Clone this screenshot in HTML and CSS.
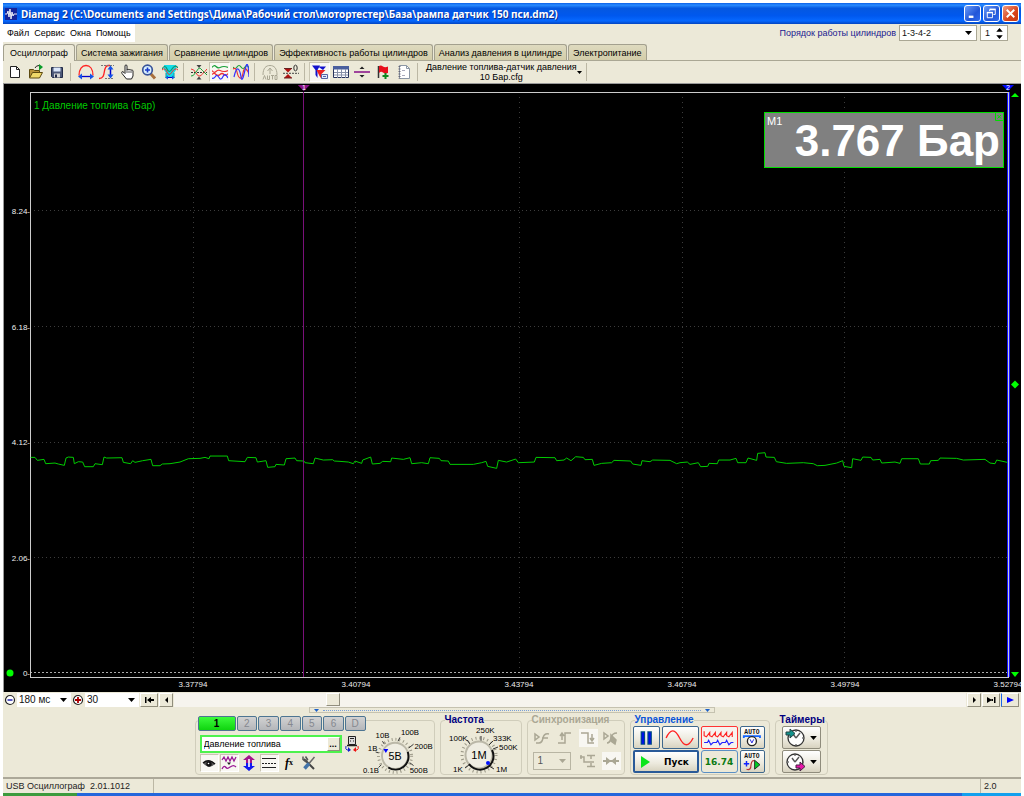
FILE: index.html
```html
<!DOCTYPE html>
<html lang="ru">
<head>
<meta charset="utf-8">
<title>Diamag 2</title>
<link rel="stylesheet" href="styles.css">
</head>
<body>
<div class="window">
  <header class="titlebar">
    <svg class="app-icon" viewBox="0 0 12 12"><rect width="12" height="12" fill="#16249a"/><path d="M0 6h2l1-3 1 6 1-8 1 10 1-7 1 4 1-2h3" fill="none" stroke="#fff" stroke-width=".9"/></svg>
    <h1 class="title">Diamag 2 (C:\Documents and Settings\Дима\Рабочий стол\мотортестер\База\рампа датчик 150 пси.dm2)</h1>
    <div class="win-buttons">
      <button class="win-btn" aria-label="Свернуть"><svg viewBox="0 0 16 16"><path d="M4 11.500h5" stroke="#fff" stroke-width="2.500"/></svg></button>
      <button class="win-btn" aria-label="Восстановить"><svg viewBox="0 0 16 16" fill="none" stroke="#fff"><path d="M6 5.500V4h6v5h-2"/><path d="M6 3.500h6.500" stroke-width="1.500"/><path d="M3.500 7v5.500h5.500V7z"/><path d="M3 7h6.500" stroke-width="1.500"/></svg></button>
      <button class="win-btn win-close" aria-label="Закрыть"><svg viewBox="0 0 16 16"><path d="M4 4l8 8M12 4l-8 8" stroke="#fff" stroke-width="2"/></svg></button>
    </div>
  </header>

  <div class="menu-row">
    <nav class="menu"><button>Файл</button><button>Сервис</button><button>Окна</button><button>Помощь</button></nav>
    <div class="order">
      <label for="order">Порядок работы цилиндров</label>
      <span class="combo boxed order-combo"><select id="order"><option>1-3-4-2</option></select><svg class="arrow" viewBox="0 0 7 4"><path d="M0 0h7L3.500 4z"/></svg></span>
      <span class="combo boxed spin"><input aria-label="Цилиндр" value="1"><svg class="spin-arrows" viewBox="0 0 7 12"><path d="M0 4h7L3.500 0zM0 8h7L3.500 12z"/></svg></span>
    </div>
  </div>

  <div class="tabs" role="tablist">
    <button class="tab active" role="tab">Осциллограф</button><button class="tab" role="tab">Система зажигания</button><button class="tab" role="tab">Сравнение цилиндров</button><button class="tab" role="tab">Эффективность работы цилиндров</button><button class="tab" role="tab">Анализ давления в цилиндре</button><button class="tab" role="tab">Электропитание</button>
  </div>

  <div class="toolbar">
    <button class="tool" aria-label="Новый"><svg viewBox="0 0 16 16"><path d="M3.500 2.500h6l3 3v8h-9z" fill="#fff" stroke="#222"/><path d="M9.500 2.500v3h3" fill="none" stroke="#222"/></svg></button>
    <button class="tool" aria-label="Открыть"><svg viewBox="0 0 16 16"><path d="M1.500 13.500v-8h4l1 1h5v7z" fill="#b8923a" stroke="#5c4a10"/><path d="M1.500 14l3-5.500h10l-3 5.500z" fill="#f0d868" stroke="#5c4a10"/><path d="M7 4q1-2.500 4-2.500" fill="none" stroke="#222"/><path d="M11 0l4 3-4 3.500z" fill="#0a9c28"/></svg></button>
    <button class="tool" aria-label="Сохранить"><svg viewBox="0 0 16 16"><path d="M2.500 3.500h11v10h-10l-1-1z" fill="#4c5878" stroke="#222b48"/><path d="M4.500 3.500h7v4h-7z" fill="#dbe7fa"/><path d="M5 9.500h6v4H5z" fill="#d6d6d6"/><path d="M6 10.500h2v3H6z" fill="#222b48"/></svg></button>
    <span class="sep"></span>
    <button class="tool" aria-label="Период"><svg viewBox="0 0 16 16" fill="none"><path d="M1 11.500C1 5 4 1.500 8 1.500s7 3.500 7 10" stroke="#f22" stroke-width="1.300"/><path d="M3 12.500h10" stroke="#00c" stroke-width="1.300"/><path d="M0 12.500l4-3v6zM16 12.500l-4-3v6z" fill="#1452e8"/></svg></button>
    <button class="tool" aria-label="Амплитуда"><svg viewBox="0 0 16 16" fill="none"><path d="M0 14.500c8 0 3-12 9-13h2" stroke="#f22" stroke-width="1.300"/><path d="M2 1.500h13M6 14.500h9" stroke="#777" stroke-dasharray="2 1"/><path d="M11.500 4v9" stroke="#00c" stroke-width="1.500"/><path d="M11.500 1.500l3 4h-6zM11.500 14.500l3-4h-6z" fill="#1452e8"/></svg></button>
    <button class="tool" aria-label="Рука"><svg viewBox="0 0 16 16"><path d="M6.500 15L2 9.500c-1-2 .5-2.500 2-1l1 1V2c0-1.500 2-1.500 2 0v4c0-1 2-1 2 0 .5-1 2-.5 2 .5.5-1 2-.5 2 .5V12l-1.500 3z" fill="#fff" stroke="#222"/><path d="M7 6v3M9 6.500V9M11 7v2" stroke="#555"/></svg></button>
    <button class="tool" aria-label="Масштаб"><svg viewBox="0 0 16 16"><path d="M9.500 9.500l4.500 5" stroke="#a8703c" stroke-width="3"/><circle cx="6.500" cy="6" r="4.800" fill="#d8f0ff" stroke="#39549a" stroke-width="1.700"/><path d="M4 6h5M6.500 3.500v5" stroke="#1838c8" stroke-width="1.600"/></svg></button>
    <button class="tool" aria-label="Фильтр"><svg viewBox="0 0 16 16"><path d="M2 1h12v5l-2 3v4H4V9L2 6z" fill="#12dce8"/><path d="M0 5q3-5 5 0t5 0 6-1" fill="none" stroke="#15906a" stroke-width="1.200"/><path d="M0 6q3-3 5 2t5 0 6-2" fill="none" stroke="#e33"/><path d="M4 13.500h8" stroke="#00c"/><path d="M3 13.500l3-2v4zM13 13.500l-3-2v4z" fill="#1452e8"/><path d="M4 9v5M12 9v5" stroke="#089aa8"/></svg></button>
    <span class="sep"></span>
    <button class="tool" aria-label="Совместить нули"><svg viewBox="0 0 16 16" fill="none"><path d="M0 8.500h16" stroke="#333" stroke-dasharray="2 1"/><path d="M0 5q3 0 5 4t4 3 7-7" stroke="#e33"/><path d="M0 12q2 1 5-4t4-4 7 7" stroke="#18a038"/><path d="M8 4L5.500 1h5zM8 12.500L5.500 15.500h5z" fill="#444"/></svg></button>
    <button class="tool pressed" aria-label="Раздельно"><svg viewBox="0 0 16 16" fill="none" stroke-width="1.200"><path d="M0 3.500q2-3 4-1t4 1 4-1 4 1" stroke="#18a038"/><path d="M0 6.500q2 3 4 1t4-1 4 1 4-1" stroke="#e33"/><path d="M0 10.500q2-2 4 0t4 0 4 0 4-1" stroke="#e33"/><path d="M0 14q2 1 3.500-1.500t3.500 1 4-1 5 1.500" stroke="#33f"/></svg></button>
    <button class="tool" aria-label="Вместе"><svg viewBox="0 0 16 16" fill="none" stroke-width="1.200"><path d="M0 3q2 3 4 0t4 0 4 0 4 1" stroke="#18a038"/><path d="M0 5q3-2 4 3t3 6 3-5 3-4 3 5" stroke="#e33"/><path d="M1 13q2-9 4-8t3 8 4-7 4 7" stroke="#33f"/></svg></button>
    <span class="sep"></span>
    <button class="tool" aria-label="Авто" disabled><svg viewBox="0 0 16 16" fill="none" stroke="#aaa794"><path d="M1 11C1 4 4 1.500 8 1.500S15 4 15 11M8 10V5M5.500 7L8 4l2.500 3"/><path d="M1 15.500l1.500-4 1.500 4M5.500 11.500v4h2v-4M9 11.500h3M10.500 11.500v4M13 11.500h2v4h-2z"/></svg></button>
    <button class="tool" aria-label="Ноль"><svg viewBox="0 0 16 16"><path d="M1 4.500h8L5 8.500zM1 14h8l-4-4z" fill="#b01010"/><path d="M0 9.300h16" stroke="#444" stroke-dasharray="2 1"/><path d="M1 4.500h8M1 14h8" stroke="#622"/><ellipse cx="12.500" cy="4" rx="1.700" ry="2.900" fill="none" stroke="#333"/></svg></button>
    <span class="sep"></span>
    <button class="tool pressed" aria-label="Маркеры"><svg viewBox="0 0 16 16"><path d="M0 1.500h8L5.500 6v8L3.500 11V6z" fill="#11c"/><path d="M6 2.500h8l-3 3.500z" fill="#11c"/><path d="M4.500 6h9L9.500 10v5L7.500 12z" fill="#e22"/><path d="M9.500 10.500h6v4h-6z" fill="#e3ebff" stroke="#5864a4"/><path d="M11 12.500h3" stroke="#5864a4"/></svg></button>
    <button class="tool" aria-label="Таблица"><svg viewBox="0 0 16 16"><path d="M.5 2.500h15v11H.5z" fill="#fff" stroke="#27345c"/><path d="M0 2h16v3.500H0z" fill="#4a5f9e"/><path d="M4.500 5v9M8.500 5v9M12.500 5v9M1 8.500h14M1 11h14" stroke="#8791a8"/></svg></button>
    <button class="tool" aria-label="Разделитель"><svg viewBox="0 0 16 16"><path d="M0 8h16" stroke="#8c1a8c" stroke-width="1.600"/><path d="M8 2.500L10.500 5h-5zM8 13.500l2.500-2.500h-5z" fill="#222"/></svg></button>
    <button class="tool" aria-label="Добавить метку"><svg viewBox="0 0 16 16"><path d="M3.500 2v12" stroke="#333" stroke-width="1.500"/><path d="M4 2q2-1 4 .5t5 0V9q-3 1-5-.5T4 9z" fill="#e8101c"/><path d="M7.500 12h6M10.500 9v6" stroke="#0a8a20" stroke-width="2"/></svg></button>
    <button class="tool" aria-label="Отчёт"><svg viewBox="0 0 16 16"><path d="M3.500 1.500h7l3 3v10h-10z" fill="#fff" stroke="#8b96a4"/><path d="M10.500 1.500v3h3" fill="none" stroke="#8b96a4"/><path d="M3.500 2v13" stroke="#667" stroke-width="2" stroke-dasharray="1 1.500"/><path d="M6 6.500h3M6 11.500h3" stroke="#aab"/></svg></button>
    <span class="sep"></span>
    <button class="config"><span>Давление топлива-датчик давления<br>10 Бар.cfg</span><svg class="mini-arrow" viewBox="0 0 5 3"><path d="M0 0h5L2.500 3z"/></svg></button>
    <span class="sep"></span>
  </div>

  <main class="chart">
    <svg class="plot" width="100%" height="100%">
      <g class="grid-v">
        <line x1="16.667%" x2="16.667%" y1="0" y2="100%"/><line x1="33.333%" x2="33.333%" y1="0" y2="100%"/><line x1="50%" x2="50%" y1="0" y2="100%"/><line x1="66.667%" x2="66.667%" y1="0" y2="100%"/><line x1="83.333%" x2="83.333%" y1="0" y2="100%"/>
      </g>
      <g class="grid-h">
        <line x1="0" x2="100%" y1="20.300%" y2="20.300%"/><line x1="0" x2="100%" y1="40.100%" y2="40.100%"/><line x1="0" x2="100%" y1="59.900%" y2="59.900%"/><line x1="0" x2="100%" y1="79.600%" y2="79.600%"/><line class="zero" x1="0" x2="100%" y1="99.300%" y2="99.300%"/>
      </g>
      <line class="cursor2" x1="100%" x2="100%" y1="0" y2="100%"/>
      <rect class="frame" width="100%" height="100%"/>
      <svg width="100%" height="100%" viewBox="90 -1014 2934 1758" preserveAspectRatio="none">
        <polyline class="trace" points="92,84 105,84 112,93 132,90 137,103 165,101 175,104 193,108 198,86 205,83 220,84 223,103 235,97 248,98 254,112 280,112 285,103 307,106 312,83 320,86 366,85 370,99 392,103 398,94 405,99 428,94 453,90 458,109 480,109 487,104 510,103 540,98 565,88 600,87 615,84 627,88 630,80 682,80 686,94 735,97 742,84 768,85 772,98 798,94 803,114 825,112 828,105 853,107 858,88 885,86 890,94 912,95 915,100 940,103 945,86 970,92 998,91 1003,95 1020,96 1045,98 1060,103 1065,95 1085,102 1088,92 1112,83 1117,104 1140,102 1148,96 1172,97 1175,86 1210,90 1230,85 1235,103 1265,100 1285,103 1290,85 1318,87 1323,94 1345,95 1350,105 1420,105 1445,100 1458,96 1463,111 1490,117 1495,93 1520,98 1547,89 1555,100 1603,98 1608,84 1665,85 1670,94 1692,92 1700,86 1713,94 1727,82 1750,84 1755,91 1777,90 1782,108 1805,102 1835,100 1842,93 1892,95 1898,104 1923,108 1926,94 1950,97 1958,92 2010,93 2030,103 2040,100 2062,98 2070,105 2095,100 2102,112 2123,111 2127,102 2152,103 2156,92 2190,92 2208,87 2213,100 2238,100 2244,86 2270,93 2273,72 2295,70 2298,83 2323,84 2329,97 2360,102 2410,100 2440,103 2452,109 2475,108 2510,101 2528,94 2532,111 2555,115 2558,88 2583,93 2588,83 2613,84 2618,92 2640,90 2645,101 2685,98 2700,102 2705,88 2755,88 2761,104 2788,104 2792,94 2815,93 2820,86 2870,87 2890,92 2955,90 2970,101 2985,103 2990,92 3022,99"/>
      </svg>
      <line class="cursor1" x1="28%" x2="28%" y1="0" y2="100%"/>
      <svg class="anchor" x="28%" y="0"><path d="M-6-7H6L0-1z" fill="#8a128a"/><text class="pin" y="-2">1</text></svg>
      <svg class="anchor" x="100%" y="0"><path d="M-6-7H6L0-1z" fill="#0008ff"/><text class="pin" y="-2">2</text><path d="M3 5h8L7 1z" fill="#0f0"/></svg>
      <svg class="anchor" x="100%" y="50%"><path d="M3 0l4-4 4 4-4 4z" fill="#0f0"/></svg>
      <svg class="anchor" x="100%" y="100%"><path d="M3-5h8L7 0z" fill="#0f0"/></svg>
      <svg class="anchor" x="0" y="99.300%"><circle cx="-20" r="3.500" fill="#0f0"/></svg>
      <text class="channel-name" x="4" y="17">1 Давление топлива (Бар)</text>
      <g class="y-labels">
        <text x="0" y="20.300%" dy="3">8.24-</text><text x="0" y="40.100%" dy="3">6.18-</text><text x="0" y="59.900%" dy="3">4.12-</text><text x="0" y="79.600%" dy="3">2.06-</text><text x="0" y="99.300%" dy="3">0-</text>
      </g>
      <g class="x-labels">
        <text x="16.667%" y="100%" dy="10">3.37794</text><text x="33.333%" y="100%" dy="10">3.40794</text><text x="50%" y="100%" dy="10">3.43794</text><text x="66.667%" y="100%" dy="10">3.46794</text><text x="83.333%" y="100%" dy="10">3.49794</text><text x="100%" y="100%" dy="10">3.52794</text>
      </g>
    </svg>
    <div class="meter"><span class="meter-id">M1</span><output class="meter-value">3.767 Бар</output><button class="meter-close" aria-label="Закрыть"><svg viewBox="0 0 8 8" fill="none" stroke="#0d0"><path d="M.5 0v7.500H8M2.500 2l3.500 3.500M6 2L2.500 5.500"/></svg></button></div>
  </main>

  <div class="navigator">
    <button class="round-btn" aria-label="Уменьшить"><svg viewBox="0 0 12 12"><circle cx="6" cy="6" r="4.500" fill="#fff" stroke="#222" stroke-width="1.200"/><path d="M3.500 6h5" stroke="#22a" stroke-width="1.500"/></svg></button>
    <span class="combo nav-combo"><select aria-label="Развёртка"><option>180 мс</option></select><svg class="arrow" viewBox="0 0 7 4"><path d="M0 0h7L3.500 4z"/></svg></span>
    <button class="round-btn" aria-label="Увеличить"><svg viewBox="0 0 12 12"><circle cx="6" cy="6" r="4.500" fill="#fff" stroke="#222" stroke-width="1.200"/><path d="M3 6h6M6 3v6" stroke="#a00" stroke-width="1.800"/></svg></button>
    <span class="combo nav-combo"><select aria-label="Масштаб"><option>30</option></select><svg class="arrow" viewBox="0 0 7 4"><path d="M0 0h7L3.500 4z"/></svg></span>
    <button class="step wide" aria-label="В начало"><svg viewBox="0 0 9 6"><path d="M0 0h1.500v6H0zM6 0v6L2 3zM6 2h3v2H6z"/></svg></button>
    <button class="step" aria-label="Назад"><svg viewBox="0 0 9 6"><path d="M6 0v6L3 3z"/></svg></button>
    <div class="track"><span class="thumb"></span></div>
    <button class="step" aria-label="Вперёд"><svg viewBox="0 0 9 6"><path d="M3 0v6l3-3z"/></svg></button>
    <button class="step wide" aria-label="В конец"><svg viewBox="0 0 9 6"><path d="M0 0v6l5-3zM4 2h2v2H4zM7 0h1.500v6H7z"/></svg></button>
    <button class="step wide follow" aria-label="Следить"><svg viewBox="0 0 9 6"><path d="M1 0v6l7-3z" fill="#00f"/></svg></button>
  </div>

  <section class="panel">
    <div class="splitter"><svg class="mini-arrow" viewBox="0 0 5 3"><path d="M0 0h5L2.500 3z"/></svg><span class="dots"></span><svg class="mini-arrow" viewBox="0 0 5 3"><path d="M0 0h5L2.500 3z"/></svg></div>
    <div class="groups">
      <div class="group channels">
        <div class="channel-row"><button class="channel on">1</button><button class="channel">2</button><button class="channel">3</button><button class="channel">4</button><button class="channel">5</button><button class="channel">6</button><button class="channel">D</button></div>
        <div class="channel-body">
          <div class="channel-left">
            <div class="name-row">
              <span class="name-box"><input aria-label="Имя канала" value="Давление топлива"><button aria-label="Выбрать">...</button></span>
              <button class="icon-btn" aria-label="Подключение"><svg viewBox="0 0 16 16" fill="none"><path d="M4.500.5h7v8h-7z" fill="#ddd" stroke="#222"/><path d="M6 2.500h4M6 5h1M9 5h1" stroke="#222"/><path d="M3 9.500h10" stroke="#222" stroke-width="1.500"/><path d="M6 14H3q-2-1-1-4" stroke="#12c"/><path d="M4 11l3 3-3 2z" fill="#12c"/><path d="M10 14h3q2-1 1-4" stroke="#e11"/><path d="M12 11l-3 3 3 2z" fill="#e11"/></svg></button>
            </div>
            <div class="icon-row">
              <button class="icon-btn pressed" aria-label="Показать"><svg viewBox="0 0 16 16"><path d="M2 8q6-6 12 1-6 6-12-1z" fill="#555"/><circle cx="8" cy="9" r="2.700" fill="#111"/><path d="M2 8q6-5 12 1" fill="none" stroke="#111" stroke-width="1.500"/><circle cx="7.500" cy="8.500" r=".8" fill="#fff"/></svg></button>
              <button class="icon-btn pressed" aria-label="Сглаживание"><svg viewBox="0 0 16 16" fill="none" stroke="#9b1896" stroke-width="1.300"><path d="M1 5l2-3 2 4 2-4 2 4 2-4 2 4 2-4"/><path d="M1 14q2-4 3.500-2t3 1 3.500-2 4 1"/><path d="M6 7.500h4L8 10z" fill="#222" stroke="none"/></svg></button>
              <button class="icon-btn" aria-label="Инверсия"><svg viewBox="0 0 16 16"><path d="M8 0l6 5h-3v3H5V5H2z" fill="#a3138c"/><path d="M8 16l6-5h-3V8H5v3H2z" fill="#1018f0"/><path d="M8 4v8" stroke="#fff" stroke-width="1.600"/></svg></button>
              <button class="icon-btn pressed" aria-label="Линии"><svg viewBox="0 0 16 16" stroke="#222"><path d="M1 3.500h14M1 12.500h14"/><path d="M1 8.500h14" stroke-dasharray="2 1"/></svg></button>
              <button class="icon-btn fx" aria-label="Функция"><i>f</i><sub>x</sub></button>
              <button class="icon-btn" aria-label="Настройка"><svg viewBox="0 0 16 16"><path d="M3 4l10 10" stroke="#444" stroke-width="2"/><path d="M2 1.500v3l2.500 2 2-2-2-3" fill="none" stroke="#555" stroke-width="1.500"/><path d="M13.500 2L8 8.500" stroke="#666" stroke-width="1.500"/><path d="M8 8.500l-4.500 5" stroke="#4474a8" stroke-width="3.500"/></svg></button>
            </div>
          </div>
          <svg class="knob volt-knob" viewBox="362 724 74 51">
            <circle class="ticks" cx="396" cy="755" r="17"/>
            <path class="leads" d="M385 743l-2-3M399 740l2-4M410 747l5-4M411 762l4 3M382 764l-3 3M379 752l-3-1"/>
            <circle class="knob-face" cx="396" cy="755" r="13.500"/><path class="knob-shadow" d="M409 751a13.500 13.500 0 0 1-20 16"/>
            <path d="M384 748h5l-2.500 4z" fill="#00f"/><text class="knob-value" x="396" y="759">5В</text>
            <text x="376" y="737">10В</text><text x="402" y="734">100В</text><text x="368" y="750">1В</text><text x="416" y="748">200В</text><text x="363" y="773">0.1В</text><text x="411" y="773">500В</text>
          </svg>
        </div>
      </div>

      <fieldset class="group frequency"><legend>Частота</legend>
        <svg class="knob freq-knob" viewBox="443 725 76 50">
          <circle class="ticks" cx="479" cy="755" r="17"/>
          <path class="leads" d="M481 741v-5M470 744l-3-4M489 745l4-4M493 749l5-2M469 765l-4 3M489 766l5 3"/>
          <circle class="knob-face" cx="479" cy="755" r="13.500"/><path class="knob-shadow" d="M492 750a13.500 13.500 0 0 1-23 14"/>
          <circle cx="488" cy="763" r="2" fill="#0010ff"/><text class="knob-value" x="479" y="759">1M</text>
          <text x="476" y="733">250K</text><text x="449" y="741">100K</text><text x="493" y="741">333K</text><text x="499" y="750">500K</text><text x="453" y="772">1K</text><text x="496" y="772">1M</text>
        </svg>
      </fieldset>

      <fieldset class="group sync" disabled><legend>Синхронизация</legend>
        <div class="sync-grid">
          <button class="icon-btn" aria-label="Фронт"><svg viewBox="0 0 16 16" fill="none" stroke="#aaa794" stroke-width="1.500"><path d="M1 4v6l4-3zM2 13h3q3 0 4-5t6-4M8 8h6"/></svg></button>
          <button class="icon-btn" aria-label="Нарастание"><svg viewBox="0 0 16 16" fill="none" stroke="#aaa794" stroke-width="1.500"><path d="M1 13h7V3h6M5 10V4M3 6l2-3 2 3"/></svg></button>
          <button class="icon-btn lit" aria-label="Спад"><svg viewBox="0 0 16 16" fill="none" stroke="#aaa794" stroke-width="1.500"><path d="M1 3h7v10h6M12 4v6M10 8l2 3 2-3"/></svg></button>
          <button class="icon-btn" aria-label="Вручную"><svg viewBox="0 0 16 16" fill="none" stroke="#aaa794" stroke-width="1.500"><path d="M1 3v6l4-3zM4 13q3 0 4-5t6-5"/><path d="M8 5l5 5-1 4-4-3z" fill="#aaa794"/></svg></button>
          <span class="combo sync-combo"><select aria-label="Канал синхронизации"><option>1</option></select><svg class="arrow" viewBox="0 0 7 4"><path d="M0 0h7L3.500 4z"/></svg></span>
          <button class="icon-btn" aria-label="Уровень"><svg viewBox="0 0 16 16" fill="none" stroke="#aaa794" stroke-width="1.500"><path d="M0 4h4v5h10M7 2.500h8M7 13.500h8M11 3v3M11 13v-3M1 2v4"/></svg></button>
          <button class="icon-btn lit" aria-label="Центр"><svg viewBox="0 0 16 16"><path d="M0 8h16" stroke="#aaa794" stroke-width="2"/><path d="M3 4l5 4-5 4zM13 4L8 8l5 4z" fill="#aaa794"/></svg></button>
        </div>
      </fieldset>

      <fieldset class="group control"><legend>Управление</legend>
        <div class="control-grid">
          <button class="big" aria-label="Пауза"><svg viewBox="0 0 20 16"><path d="M5 2h4v12H5zM11 2h4v12h-4z" fill="#004b80"/><path d="M7 3v10M13 3v10" stroke="#0010e8" stroke-width="2"/></svg></button>
          <button class="big" aria-label="Синус"><svg viewBox="0 0 26 16"><path d="M1 8C5-1 9 0 13 8s8 8 12 0" fill="none" stroke="#f22" stroke-width="1.200"/></svg></button>
          <button class="big red" aria-label="Поток"><svg viewBox="0 0 28 16" fill="none"><path d="M1 2v4l2 1 3-4v3l2 1 3-4v3l2 1 3-4v3l2 1 3-4v3l2 1 3-4v4" stroke="#f22"/><path d="M1 12h3l1-2 2 4 2-2h3l1-2 2 4 2-2h3l1-2 2 4 2-2h2" stroke="#22f"/></svg></button>
          <button class="big" aria-label="Авто вольт"><svg viewBox="0 0 22 20"><text class="auto" x="11" y="6">AUTO</text><path d="M2 10V8h18v2" fill="none" stroke="#1565ff" stroke-width="2"/><circle cx="11" cy="13.500" r="5" fill="#fff" stroke="#222" stroke-width="1.500"/><path d="M9 11.500l2 4 2-4" fill="none" stroke="#11d"/></svg></button>
          <button class="big start"><svg viewBox="0 0 9 12"><path d="M0 0l9 6-9 6z" fill="#0be51c"/></svg><span>Пуск</span></button>
          <output class="rate">16.74</output>
          <button class="big" aria-label="Авто запуск"><svg viewBox="0 0 22 20" fill="none"><text class="auto" x="11" y="6">AUTO</text><path d="M2 12h6M5 9v6" stroke="#12f" stroke-width="1.600"/><path d="M5 18q5 2 5-5 1-6 4-4" stroke="#b33" stroke-width="1.300"/><path d="M14 8l6 5-6 5z" fill="#0c2" stroke="#222"/></svg></button>
        </div>
      </fieldset>

      <fieldset class="group timers"><legend>Таймеры</legend>
        <div class="timer-list">
          <button class="big" aria-label="Таймер запуска"><svg class="clock" viewBox="0 0 20 20"><circle cx="11" cy="10" r="8" fill="#fff" stroke="#333" stroke-width="1.300"/><path d="M11 10l4-5M11 10L8 6" stroke="#555" stroke-width="1.400"/><path d="M11 3v1M11 16v1M17 10h1" stroke="#333"/><path d="M1 4h4V1l5 4.500L5 10V7H1z" fill="#12928b" stroke="#244"/></svg><svg class="mini-arrow" viewBox="0 0 5 3"><path d="M0 0h5L2.500 3z"/></svg></button>
          <button class="big" aria-label="Таймер остановки"><svg class="clock" viewBox="0 0 20 20"><circle cx="10" cy="10" r="8" fill="#fff" stroke="#333" stroke-width="1.300"/><path d="M10 10l4-5M10 10L7 6" stroke="#555" stroke-width="1.400"/><path d="M10 3v1M3 10h1M17 10h1" stroke="#333"/><path d="M11 13h4v-3l5 4.500-5 4.500v-3h-4z" fill="#e814a8" stroke="#424"/></svg><svg class="mini-arrow" viewBox="0 0 5 3"><path d="M0 0h5L2.500 3z"/></svg></button>
        </div>
      </fieldset>
    </div>
  </section>

  <footer class="status"><span class="cell">USB Осциллограф&nbsp; 2.01.1012</span><span class="cell"></span><span class="cell">2.0</span></footer>
</div>
<div class="taskbar"><span class="start-edge"></span><span class="task-mid"></span><span class="tray"></span></div>
</body>
</html>
```
FILE: styles.css
```css
* { box-sizing: border-box; }
body { margin: 0; padding: 3px 3px 0; height: 100vh; display: flex; flex-direction: column; background: #fff; font: 9px/12px "Liberation Sans", Arial, sans-serif; color: #000; }
button, input, select { font: inherit; color: inherit; margin: 0; padding: 0; border: 0; border-radius: 0; background: none; appearance: none; min-width: 0; }
svg { display: block; }
.window { flex: 1; min-height: 0; display: flex; flex-direction: column; background: #ece9d8; }

.titlebar { display: flex; align-items: center; gap: 4px; height: 21px; padding: 0 2px; background: linear-gradient(#0a5fe8, #2a8cff 10%, #0558e0 25%, #0058ee 60%, #0668ff 85%, #0344c0); color: #fff; }
.app-icon { width: 12px; height: 12px; }
.title { flex: 1; margin: 0; font: bold 10px/14px "Noto Sans", "DejaVu Sans", sans-serif; white-space: nowrap; overflow: hidden; text-shadow: 1px 1px #0a2f90; }
.win-buttons { display: flex; gap: 2px; }
.win-btn { width: 17px; height: 17px; border: 1px solid #fff; border-radius: 3px; background: linear-gradient(135deg, #6a9cf8, #2256d8 60%, #2f6cf0); }
.win-close { background: linear-gradient(135deg, #f09a80, #d8431c 60%, #c8380f); }

.menu-row { display: flex; justify-content: space-between; height: 20px; }
.menu { display: flex; gap: 5px; height: 18px; padding: 0 4px; background: #fff; }
.order { display: flex; align-items: center; gap: 3px; height: 18px; padding-right: 13px; color: #1a1a90; }
.combo { display: grid; align-items: center; background: #fff; color: #111; }
.combo > * { grid-area: 1 / 1; }
.combo select, .combo input { width: 100%; height: 100%; padding: 0 2px; outline: 0; }
.arrow { width: 7px; height: 4px; justify-self: end; margin-right: 4px; pointer-events: none; }
.boxed { height: 16px; border: 1px solid #aaa794; }
.order-combo { width: 78px; }
.spin { width: 28px; }
.spin input { padding: 0 4px; }
.spin-arrows { width: 7px; height: 11px; justify-self: end; margin-right: 4px; }

.tabs { display: flex; align-items: flex-end; gap: 1px; height: 17px; border-bottom: 1px solid #aaa794; }
.tab { height: 16px; padding: 0 4px; border: 1px solid #a3a08e; border-bottom: 0; border-radius: 3px 3px 0 0; background: linear-gradient(#dedabf, #d3cda9); white-space: nowrap; }
.tab.active { height: 17px; margin-bottom: -1px; padding: 0 6px; background: #ece9d8; }

.toolbar { display: flex; align-items: center; height: 23px; padding-left: 1px; border-bottom: 1px solid #999; }
.tool { display: grid; place-items: center; width: 21px; height: 20px; }
.tool svg, .icon-btn svg { width: 16px; height: 16px; }
.pressed { background: #f8f7f2; border: 1px solid #c9c5b2; border-right-color: #fff; border-bottom-color: #fff; }
.sep { width: 1px; height: 18px; margin: 0 4px 0 3px; background: #bbb7a4; }
.config { display: flex; align-items: center; gap: 0; height: 21px; padding: 0 1px 0 4px; line-height: 10px; text-align: center; }
.mini-arrow { width: 5px; height: 3px; }

.chart { position: relative; flex: 1; min-height: 0; padding: 8px 13px 15px 26px; background: #000; border-left: 1px solid #999; overflow: hidden; }
.plot { overflow: visible; }
.plot line { stroke: #3c3c3c; shape-rendering: crispEdges; }
.plot .grid-v line { stroke-dasharray: 1 4; }
.plot .grid-h line { stroke-dasharray: 1 3; }
.plot .grid-h .zero { stroke: #aaa; stroke-dasharray: 2 2; }
.frame { fill: none; stroke: #ccc; shape-rendering: crispEdges; }
.trace { fill: none; stroke: #00cc00; vector-effect: non-scaling-stroke; }
.plot .cursor1 { stroke: #7a107a; }
.plot .cursor2 { stroke: #1414ff; stroke-width: 3; }
.anchor { overflow: visible; }
.pin { font-size: 7px; fill: #fff; text-anchor: middle; }
.channel-name { font-size: 10px; fill: #00c800; }
.y-labels, .x-labels { font-size: 8px; fill: #eee; }
.y-labels { text-anchor: end; }
.x-labels { text-anchor: middle; }
.meter { position: absolute; top: 28px; right: 17px; display: flex; justify-content: space-between; width: 240px; height: 56px; padding: 2px 3px 0 2px; border: 1px solid #0d0; background: #808080; color: #fff; }
.meter-id { font-size: 11px; }
.meter-value { font-size: 44px; line-height: 52px; font-weight: bold; white-space: nowrap; }
.meter-close { position: absolute; top: 0; right: 0; width: 8px; height: 8px; }
.meter-close svg { width: 8px; height: 8px; }

.navigator { display: flex; align-items: center; height: 15px; padding: 1px 2px 0 1px; gap: 1px; font-size: 10px; }
.round-btn { width: 12px; height: 13px; }
.nav-combo { width: 54px; height: 14px; }
.step { display: grid; place-items: center; width: 14px; height: 14px; border: 1px solid #fff; border-right-color: #918e7d; border-bottom-color: #918e7d; background: #ece9d8; }
.step svg { width: 9px; height: 6px; }
.wide { width: 18px; }
.follow { border-left-color: #1a66e8; }
.track { flex: 1; height: 14px; padding-left: 15%; background: #f6f4ee; }
.thumb { display: block; width: 14px; height: 13px; border: 1px solid #fff; border-right-color: #918e7d; border-bottom-color: #918e7d; background: #ece9d8; }

.panel { display: flex; flex-direction: column; align-items: center; padding-bottom: 2px; border-bottom: 2px solid #aca899; }
.splitter { display: flex; align-items: center; gap: 4px; width: 406px; max-width: 100%; height: 6px; padding: 0 4px; border: 1px solid #c5c2b0; color: #1c50b0; }
.splitter svg { fill: #1c60c8; }
.dots { flex: 1; border-top: 1px dotted #7aa0d8; }
.groups { display: flex; gap: 5px; align-items: stretch; padding: 1px 2px 0 0; }
.group { height: 61px; margin: 0; padding: 0; border: 1px solid #d0cdbb; border-radius: 4px; min-width: 0; }
.group legend { margin-left: 4px; padding: 0; font-size: 10px; line-height: 12px; font-weight: bold; color: #000080; }
.channels { width: 240px; height: 55px; margin-top: 6px; }
.channel-row { display: flex; gap: 1px; width: 168px; margin: -5px 0 0 2px; background: #ece9d8; }
.channel { flex: 1; height: 15px; border: 1px solid #4d7592; border-radius: 2px; background: linear-gradient(#d2d2d2, #b4b6ba); color: #85888f; font-size: 10px; }
.channel.on { flex: 0 0 38px; background: linear-gradient(#3dfb3d, #0fd40f); color: #000; font-weight: bold; }
.channel-body { display: flex; margin-top: -6px; }
.channel-left { width: 166px; padding: 10px 0 0 4px; }
.name-row { display: flex; align-items: center; gap: 1px; }
.name-box { display: flex; width: 142px; height: 18px; border: 2px solid #4df24d; background: #fff; }
.name-box input { flex: 1; padding: 0 2px; outline: 0; }
.name-box button { width: 13px; border: 1px solid #fff; border-right-color: #918e7d; border-bottom-color: #918e7d; background: #ece9d8; line-height: 6px; font-weight: bold; }
.icon-btn { display: grid; place-items: center; width: 19px; height: 18px; }
.icon-row { display: flex; gap: 1px; padding-top: 1px; }
.fx { display: flex; align-items: center; justify-content: center; font: bold 12px/16px "Liberation Serif", serif; }
.fx sub { font-size: 8px; }
.knob { font-size: 8px; }
.volt-knob { width: 74px; height: 51px; }
.freq-knob { width: 76px; height: 50px; margin: -1px auto 0; }
.ticks { fill: none; stroke: #9a9786; stroke-width: 3; stroke-dasharray: 1 3; }
.leads { stroke: #333; }
.knob-face { fill: #efede2; stroke: #bbb8a8; stroke-width: 2; }
.knob-shadow { fill: none; stroke: #111; stroke-width: 2; }
.knob-value { font-size: 11px; text-anchor: middle; }

.frequency { width: 82px; }
.sync { width: 98px; }
.group.sync legend { color: #aaa794; }
.sync-grid { display: grid; grid-template-columns: repeat(4, 20px); grid-auto-rows: 18px; gap: 5px 3px; padding: 3px 0 0 5px; }
.lit { background: #f8f7f2; }
.sync-combo { grid-column: span 2; width: 38px; height: 18px; border: 1px solid #b8b5a3; background: #ece9d8; }
.sync-combo select { padding: 0 4px; font-size: 10px; color: #555; opacity: 1; }
.sync-combo .arrow { fill: #aaa794; }
.control { width: 140px; }
.group.control legend { color: #0a55d8; }
.control-grid { display: grid; grid-template-columns: 27px 37px 37px 25px; grid-auto-rows: 23px; gap: 1px 2px; padding-left: 2px; }
.big { display: grid; place-items: center; border: 1px solid #3f688c; border-radius: 2px; background: linear-gradient(#fff, #ece9dd 60%, #d8d3c0); }
.big > svg { height: 18px; }
.big > .mini-arrow { height: 4px; width: 7px; }
.red { border-color: #f33; background: #f6f2ee; }
.start { grid-column: span 2; grid-template-columns: 22px 1fr; border: 2px solid #2a5a98; font: bold 9px/12px "DejaVu Sans", sans-serif; }
.start > svg { height: 12px; }
.rate { display: grid; place-items: center; border: 1px solid #5a8fc4; border-radius: 3px; color: #0b7a12; font: bold 9px/12px "DejaVu Sans", sans-serif; }
.auto { font: bold 7px "Liberation Mono", monospace; text-anchor: middle; fill: #111; }
.timers { width: 53px; }
.timer-list { display: grid; grid-auto-rows: 23px; gap: 1px; padding: 0 6px; }
.timer-list .big { grid-template-columns: 24px 1fr; border-color: #8f8c7c; }
.timer-list .clock { width: 20px; height: 20px; }

.status { display: flex; height: 14px; line-height: 14px; color: #222; }
.cell { padding: 0 3px; border-right: 1px solid #bbb7a4; }
.cell:nth-child(1) { flex: 0 0 151px; white-space: nowrap; }
.cell:nth-child(2) { flex: 1; margin-left: 3px; }
.cell:nth-child(3) { flex: 0 0 40px; border-right: 0; }
.taskbar { display: flex; height: 3px; background: #2466dc; }
.start-edge { width: 74px; background: #3d9a3d; }
.task-mid { flex: 1; }
.tray { width: 59px; background: #12a0ee; }
```
